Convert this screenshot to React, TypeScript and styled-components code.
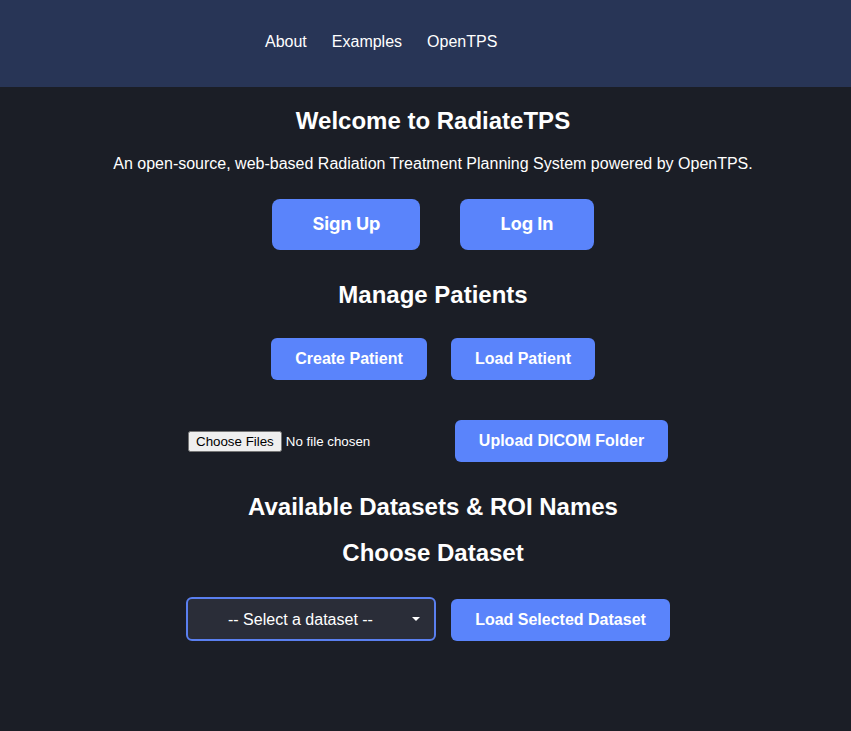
import React from "react";
import styled, { createGlobalStyle } from "styled-components";

const Global = createGlobalStyle`
  html, body { margin: 0; padding: 0; background: #1b1e26; }
  body { font-family: "Liberation Sans", Arial, sans-serif; color: #ffffff; }
  * { box-sizing: border-box; }
`;

const Header = styled.header`
  height: 87px;
  background: #283556;
  display: flex;
  align-items: center;
  padding-left: 265px;
  padding-bottom: 4px;
`;

const Nav = styled.nav`
  display: flex;
  gap: 25px;
`;

const NavLink = styled.a`
  color: #ffffff;
  font-size: 16px;
  text-decoration: none;
`;

const Main = styled.main`
  display: flex;
  flex-direction: column;
  align-items: center;
  padding-left: 15px;
`;

const Title = styled.h1<{ $mt: number; $mb: number }>`
  font-size: 24px;
  font-weight: 700;
  margin: ${(p) => p.$mt}px 0 ${(p) => p.$mb}px;
  line-height: 28px;
`;

const Sub = styled.p`
  font-size: 16px;
  margin: 0;
  line-height: 20px;
`;

const Row = styled.div<{ $gap: number; $mt: number; $shift?: number; $align?: string }>`
  display: flex;
  align-items: ${(p) => p.$align ?? "center"};
  justify-content: center;
  gap: ${(p) => p.$gap}px;
  margin-top: ${(p) => p.$mt}px;
  padding-right: ${(p) => p.$shift ?? 0}px;
`;

const BigButton = styled.button`
  background: #5a84fb;
  color: #ffffff;
  border: none;
  border-radius: 8px;
  height: 51px;
  padding: 0 40px 2px;
  font-family: Inter, "Liberation Sans", sans-serif;
  font-weight: 700;
  font-size: 18px;
`;

const Button = styled.button<{ $w: number }>`
  background: #5a84fb;
  color: #ffffff;
  border: none;
  border-radius: 6px;
  height: 42px;
  width: ${(p) => p.$w}px;
  font-family: "Liberation Sans", Arial, sans-serif;
  font-weight: 700;
  font-size: 16px;
`;

const FileInput = styled.input`
  color: #ffffff;
  font-family: "Liberation Sans", Arial, sans-serif;
  font-size: 13.333px;
  width: 253px;
`;

const SelectWrap = styled.div`
  position: relative;
  width: 250px;
  height: 44px;
`;

const Select = styled.select`
  appearance: none;
  width: 100%;
  height: 100%;
  background: #2a2d38;
  color: #ffffff;
  border: 2px solid #5a7fef;
  border-radius: 6px;
  font-family: "Liberation Sans", Arial, sans-serif;
  font-size: 16px;
  padding: 0 40px 0 40px;
  outline: none;
`;

const Caret = styled.span`
  position: absolute;
  right: 16px;
  top: 20px;
  width: 0;
  height: 0;
  border-left: 4px solid transparent;
  border-right: 4px solid transparent;
  border-top: 4px solid #ffffff;
  pointer-events: none;
`;

export default function App() {
  return (
    <>
      <Global />
      <Header>
        <Nav>
          <NavLink href="#">About</NavLink>
          <NavLink href="#">Examples</NavLink>
          <NavLink href="#">OpenTPS</NavLink>
        </Nav>
      </Header>
      <Main>
        <Title $mt={20} $mb={19}>Welcome to RadiateTPS</Title>
        <Sub>An open-source, web-based Radiation Treatment Planning System powered by OpenTPS.</Sub>
        <Row $gap={40} $mt={25}>
          <BigButton>Sign Up</BigButton>
          <BigButton>Log In</BigButton>
        </Row>
        <Title $mt={31} $mb={0}>Manage Patients</Title>
        <Row $gap={24} $mt={29}>
          <Button $w={156}>Create Patient</Button>
          <Button $w={144}>Load Patient</Button>
        </Row>
        <Row $gap={14} $mt={40} $shift={10}>
          <FileInput type="file" multiple />
          <Button $w={213}>Upload DICOM Folder</Button>
        </Row>
        <Title $mt={31} $mb={0}>Available Datasets &amp; ROI Names</Title>
        <Title $mt={18} $mb={0}>Choose Dataset</Title>
        <Row $gap={15} $mt={30} $shift={10} $align="flex-end">
          <SelectWrap>
            <Select defaultValue="">
              <option value="">-- Select a dataset --</option>
            </Select>
            <Caret />
          </SelectWrap>
          <Button $w={219}>Load Selected Dataset</Button>
        </Row>
      </Main>
    </>
  );
}
